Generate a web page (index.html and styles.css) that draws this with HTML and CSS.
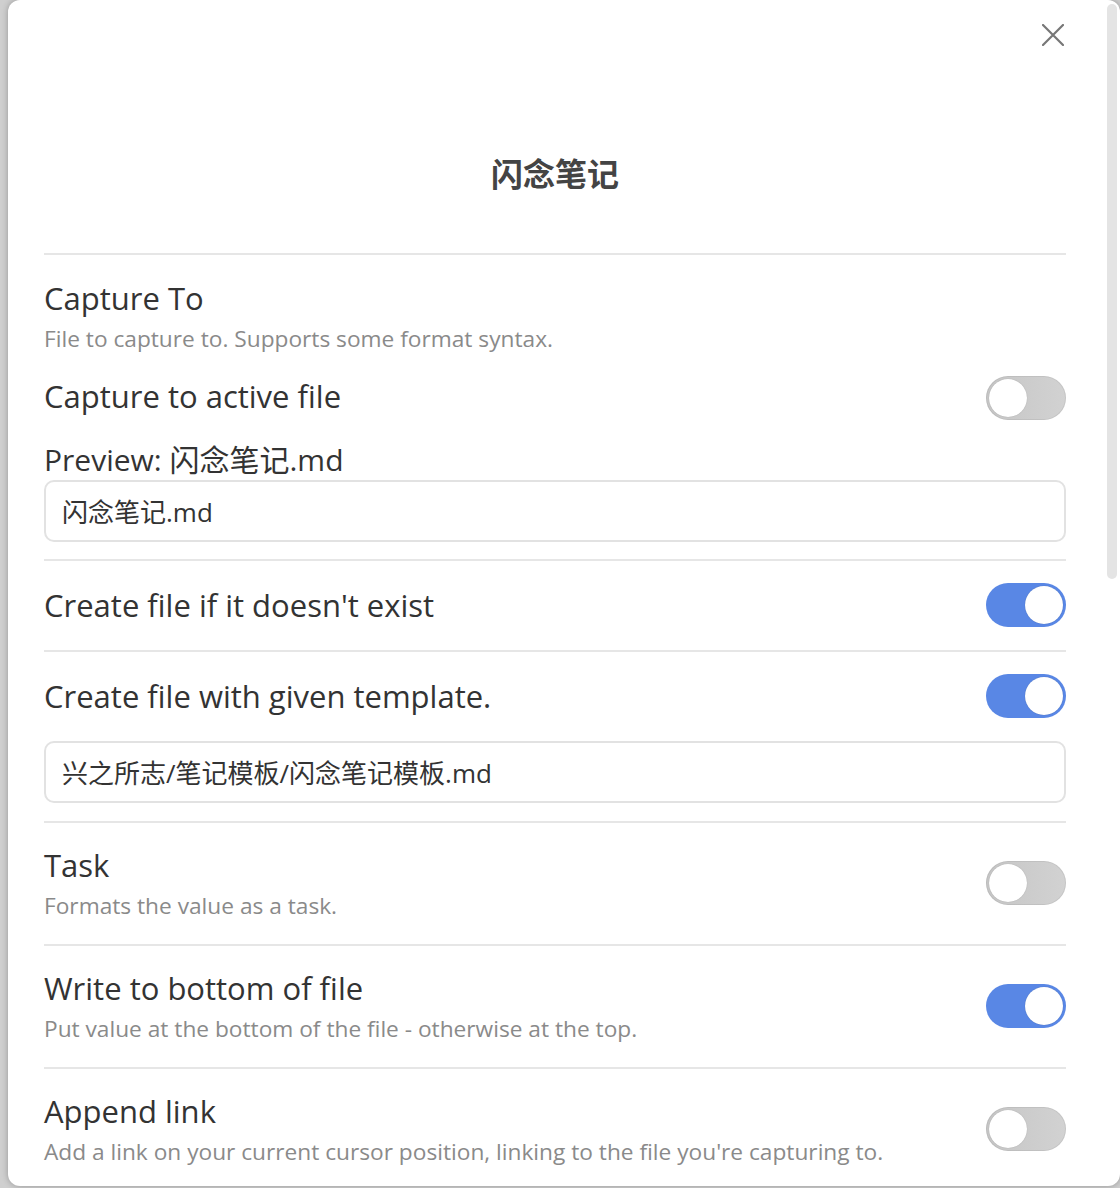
FILE: index.html
```html
<!DOCTYPE html>
<html lang="zh-CN">
<head>
<meta charset="utf-8">
<title>闪念笔记</title>
<link rel="stylesheet" href="styles.css">
</head>
<body>
<div class="modal">
  <button class="close" aria-label="Close">
    <svg width="22" height="22" viewBox="0 0 22 22"><path d="M1 1 L21 21 M21 1 L1 21" stroke="#777" stroke-width="2.2" stroke-linecap="round" fill="none"/></svg>
  </button>
  <div class="scroll-thumb"></div>
  <div class="content">
    <h1 class="title">闪念笔记</h1>

    <section class="item item-first">
      <div class="name">Capture To</div>
      <div class="desc">File to capture to. Supports some format syntax.</div>
      <div class="row row-sub">
        <div class="name name-sub">Capture to active file</div>
        <span class="toggle"></span>
      </div>
      <div class="preview">Preview: 闪念笔记.md</div>
      <div class="input">闪念笔记.md</div>
    </section>

    <section class="item">
      <div class="row">
        <div class="name">Create file if it doesn't exist</div>
        <span class="toggle on"></span>
      </div>
    </section>

    <section class="item item-input">
      <div class="row">
        <div class="name">Create file with given template.</div>
        <span class="toggle on"></span>
      </div>
      <div class="input input-gap">兴之所志/笔记模板/闪念笔记模板.md</div>
    </section>

    <section class="item">
      <div class="row">
        <div class="info">
          <div class="name">Task</div>
          <div class="desc">Formats the value as a task.</div>
        </div>
        <span class="toggle"></span>
      </div>
    </section>

    <section class="item">
      <div class="row">
        <div class="info">
          <div class="name">Write to bottom of file</div>
          <div class="desc">Put value at the bottom of the file - otherwise at the top.</div>
        </div>
        <span class="toggle on"></span>
      </div>
    </section>

    <section class="item item-last">
      <div class="row">
        <div class="info">
          <div class="name">Append link</div>
          <div class="desc">Add a link on your current cursor position, linking to the file you're capturing to.</div>
        </div>
        <span class="toggle"></span>
      </div>
    </section>
  </div>
</div>
</body>
</html>
```

FILE: styles.css
```css
* { box-sizing: border-box; }

html, body {
  margin: 0;
  padding: 0;
  height: 100%;
}

body {
  background: #cfcfcf;
  font-family: "Open Sans", "Noto Sans CJK SC", sans-serif;
  overflow: hidden;
}

.modal {
  position: relative;
  margin-left: 8px;
  width: 1112px;
  height: 1186px;
  background: #ffffff;
  border-radius: 12px;
  overflow: hidden;
  box-shadow: 0 0 6px rgba(0, 0, 0, 0.28);
}

.close {
  position: absolute;
  top: 24px;
  left: 1034px;
  width: 22px;
  height: 22px;
  padding: 0;
  border: 0;
  background: transparent;
  display: flex;
  z-index: 2;
}

.scroll-thumb {
  position: absolute;
  top: 4px;
  left: 1099px;
  width: 10px;
  height: 575px;
  border-radius: 5px;
  background: #e4e4e4;
}

.content {
  padding: 152px 54px 0 36px;
}

.title {
  margin: 0;
  height: 103px;
  line-height: 40px;
  font-size: 32px;
  font-weight: 700;
  color: #444;
  text-align: center;
  font-family: "Noto Sans CJK SC", sans-serif;
  border-bottom: 2px solid #e6e6e6;
}

.item {
  padding: 22px 0 23px;
  border-bottom: 2px solid #e6e6e6;
}

.item-first { padding-top: 23px; padding-bottom: 17px; }
.item-input { padding-bottom: 18px; }
.item-last { border-bottom: 0; }

.row {
  display: flex;
  align-items: center;
  justify-content: space-between;
  gap: 24px;
  min-height: 44px;
}

.row-sub { margin-top: 22px; }

.info {
  display: flex;
  flex-direction: column;
  gap: 6px;
}

.name, .preview {
  font-size: 31px;
  line-height: 40px;
  color: #333;
}

.name-sub { padding-bottom: 4px; }

.preview { font-size: 30px; margin-top: 20px; }

.desc {
  font-size: 22.7px;
  line-height: 30px;
  color: #8a8a8a;
}

.item-first > .desc { margin-top: 6px; }

.input {
  height: 62px;
  border: 2px solid #e2e2e2;
  border-radius: 10px;
  padding: 0 16px;
  display: flex;
  align-items: center;
  font-size: 26px;
  color: #333;
}

.input-gap { margin-top: 23px; }

.toggle {
  position: relative;
  flex: none;
  width: 80px;
  height: 44px;
  border-radius: 22px;
  background: linear-gradient(90deg, #c6c6c6, #d2d2d2);
  box-shadow: inset 0 0 0 1px rgba(0, 0, 0, 0.06);
}

.toggle::after {
  content: "";
  position: absolute;
  top: 3px;
  left: 3px;
  width: 38px;
  height: 38px;
  border-radius: 50%;
  background: #ffffff;
  box-shadow: 0 0 1px rgba(0, 0, 0, 0.25);
}

.toggle.on {
  background: #5987e5;
  box-shadow: none;
}

.toggle.on::after {
  left: 39px;
}
```
